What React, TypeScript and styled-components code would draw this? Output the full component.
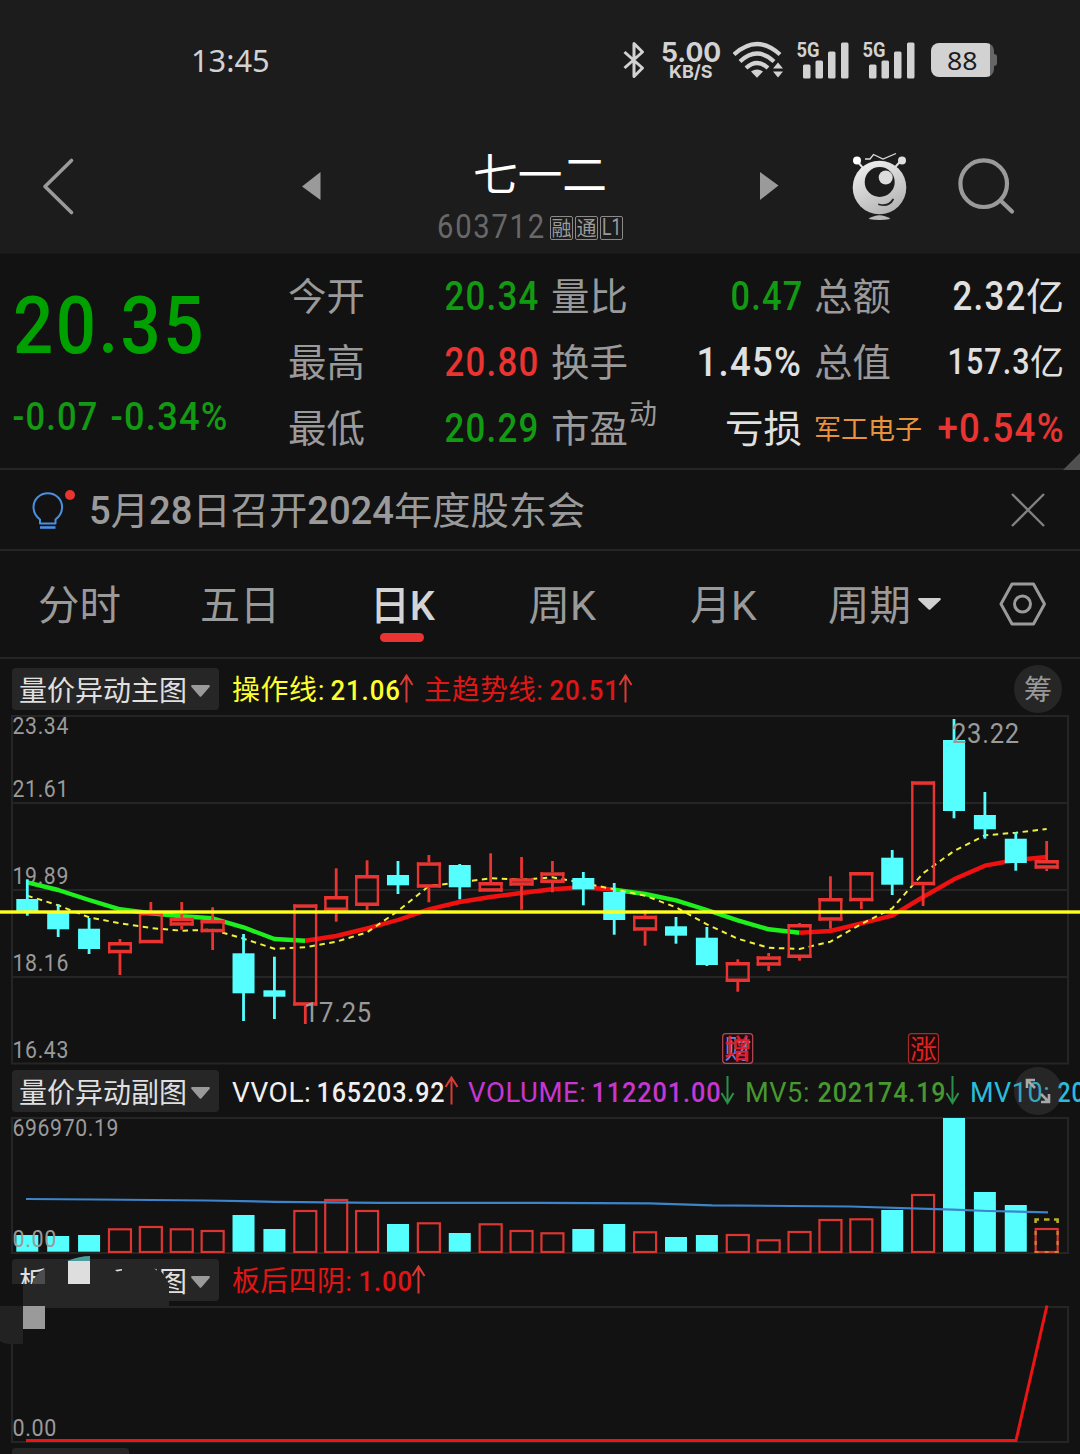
import React, { useLayoutEffect, useRef, useState } from "react";
import styled, { createGlobalStyle } from "styled-components";

const FONT = `Roboto, "Noto Sans CJK SC", sans-serif`;
const RED = "#e93431";
const GREEN = "#129a12";
const CYAN = "#55ffff";
const GREY = "#9a9a9a";
const LINE = "#252525";

const Global = createGlobalStyle`
  html, body { margin: 0; background: #121212; overflow: hidden; }
  * { box-sizing: border-box; }
`;

const Screen = styled.div`
  width: 1080px;
  height: 1454px;
  overflow: hidden;
  background: #121212;
  font-family: ${FONT};
  color: #e0e0e0;
  display: flex;
  flex-direction: column;
`;

/* ---------- text squeezed to a given advance width ---------- */

const FitBox = styled.span<{ $w: number; $size: number; $color?: string; $weight?: number; $dx?: number; $dy?: number; $font?: string }>`
  display: inline-block;
  flex: none;
  width: ${(p) => p.$w}px;
  height: ${(p) => p.$size}px;
  line-height: ${(p) => p.$size}px;
  font-size: ${(p) => p.$size}px;
  font-weight: ${(p) => p.$weight ?? 400};
  color: ${(p) => p.$color ?? "inherit"};
  font-family: ${(p) => p.$font ?? "inherit"};
  white-space: nowrap;
  transform: translate(${(p) => p.$dx ?? 0}px, ${(p) => p.$dy ?? 0}px);
`;
const FitInner = styled.span<{ $ls: number }>`
  display: inline-block;
  transform-origin: 0 50%;
  letter-spacing: ${(p) => p.$ls}em;
`;
const Strong = styled.b`
  font-weight: 500;
`;

type FitProps = { w: number; size: number; color?: string; weight?: number; dx?: number; dy?: number; font?: string; ls?: number; children: React.ReactNode };
function Fit({ w, size, color, weight, dx, dy, font, ls = 0, children }: FitProps) {
  const ref = useRef<HTMLSpanElement>(null);
  const [k, setK] = useState(1);
  useLayoutEffect(() => {
    if (ref.current && ref.current.offsetWidth) setK(w / ref.current.offsetWidth);
  }, [w, size]);
  return (
    <FitBox $w={w} $size={size} $color={color} $weight={weight} $dx={dx} $dy={dy} $font={font}>
      <FitInner ref={ref} $ls={ls} style={{ transform: `scaleX(${k})` }}>{children}</FitInner>
    </FitBox>
  );
}

const Num = (p: FitProps) => <Fit weight={500} ls={0.035} dx={1.5} {...p} />;

/* ---------- status bar ---------- */

const Top = styled.header`
  height: 254px;
  flex: none;
  background: #1c1c1c;
  border-bottom: 1px solid #181818;
  display: flex;
  flex-direction: column;
`;
const StatusBar = styled.div`
  height: 120px;
  padding: 0 83px 0 191px;
  display: flex;
  align-items: center;
  justify-content: space-between;
  color: #d2d2d2;
`;
const StatusIcons = styled.div`
  display: flex;
  align-items: center;
`;
const Speed = styled.div`
  width: 60px;
  margin: 0 12px 0 16px;
  display: flex;
  flex-direction: column;
  align-items: center;
`;
const Signal = styled.div`
  width: 52px;
  height: 38px;
  margin-right: 14px;
`;
const Battery = styled.div`
  display: flex;
  align-items: center;
  margin-left: 2px;
`;
const BatteryBody = styled.div`
  width: 63px;
  height: 34px;
  border-radius: 8px;
  background: linear-gradient(90deg, #d2d2d2 59px, #666 59px);
  color: #1c1c1c;
  display: flex;
  align-items: center;
  padding-left: 16px;
`;
const BatteryNub = styled.div`
  width: 3px;
  height: 12px;
  border-radius: 0 3px 3px 0;
  background: #666;
`;

const SignalIcon = () => (
  <svg width="52" height="38" viewBox="0 0 52 38" fill="#d2d2d2" overflow="visible">
    <text x="-0.500" y="15.500" fontSize="20.500" fontWeight="700" fontFamily="Roboto" textLength="23" lengthAdjust="spacingAndGlyphs">5G</text>
    <rect x="6" y="23.500" width="7.500" height="14" rx="1.500" />
    <rect x="18.500" y="19.500" width="7.500" height="18" rx="1.500" />
    <rect x="31" y="10.500" width="7.500" height="27" rx="1.500" />
    <rect x="44" y="1.500" width="7.500" height="36" rx="1.500" />
  </svg>
);

/* ---------- title bar ---------- */

const TitleBar = styled.div`
  height: 133px;
  display: grid;
  grid-template-columns: 300px 137px 186px 135px 93px 60px 1fr;
  align-items: start;
`;
const Slot = styled.div<{ $top: number; $left?: number }>`
  padding: ${(p) => p.$top}px 0 0 ${(p) => p.$left ?? 0}px;
  line-height: 0;
`;
const TitleBlock = styled.div`
  display: flex;
  flex-direction: column;
  padding-top: 33px;
`;
const TitleName = styled.div`
  height: 47px;
  padding-left: 36px;
  line-height: 0;
`;
const CodeRow = styled.div`
  display: flex;
  align-items: center;
  height: 50px;
  gap: 2px;
`;
const MarketTag = styled.span`
  width: 23px;
  height: 24px;
  border: 1px solid #8a8a8a;
  border-radius: 2px;
  display: flex;
  align-items: center;
  justify-content: center;
  margin-top: 5px;
`;

const RobotIcon = () => (
  <svg width="58" height="70" viewBox="0 0 58 70">
    <defs>
      <linearGradient id="bot" x1="0.2" y1="0" x2="0.7" y2="1">
        <stop offset="0" stopColor="#f0f0f0" />
        <stop offset="1" stopColor="#b2b2b2" />
      </linearGradient>
    </defs>
    <path d="M5.500 9.500l7 8M50 9.500l-7 8" stroke="#e0e0e0" strokeWidth="2" />
    <circle cx="6" cy="9.500" r="4" fill="#fff" />
    <circle cx="51" cy="9.500" r="4" fill="#e0e0e0" />
    <path d="M14 8h5l3.500-4.500L32 8l13-5.500" fill="none" stroke="#ddd" strokeWidth="1.300" />
    <circle cx="28.500" cy="36.500" r="26.800" fill="url(#bot)" />
    <circle cx="28.700" cy="31" r="15" fill="#1c1c1c" />
    <circle cx="34.700" cy="26.500" r="7" fill="#dcdcdc" />
    <path d="M28 53.500q10 2.500 14-5" fill="none" stroke="#222" strokeWidth="1.800" strokeLinecap="round" />
    <path d="M17.500 68q11-7.500 22 0q-11 1.800-22 0z" fill="#b8b8b8" />
  </svg>
);

/* ---------- quote ---------- */

const Quote = styled.section`
  position: relative;
  height: 216px;
  flex: none;
  display: grid;
  grid-template-columns: 275px 249px 249px 249px;
  column-gap: 14px;
  border-bottom: 2px solid ${LINE};
`;
const PriceCol = styled.div`
  display: flex;
  flex-direction: column;
  padding: 33px 0 0 12px;
`;
const ChangeRow = styled.div`
  display: flex;
  gap: 12px;
  padding-top: 31px;
`;
const StatCol = styled.div`
  display: flex;
  flex-direction: column;
  padding-top: 9px;
`;
const StatRow = styled.div`
  height: 66px;
  display: flex;
  align-items: center;
  justify-content: space-between;
`;
const Group = styled.span`
  display: flex;
  align-items: center;
`;
const Corner = styled.span`
  position: absolute;
  right: 0;
  bottom: -2px;
  border-left: 17px solid transparent;
  border-bottom: 17px solid #505050;
`;

/* ---------- notice ---------- */

const Notice = styled.section`
  height: 81px;
  flex: none;
  display: flex;
  align-items: center;
  padding: 0 34px 0 31px;
  border-bottom: 2px solid ${LINE};
`;
const NoticeText = styled.div`
  flex: 1;
  padding-left: 12px;
  line-height: 0;
`;

/* ---------- tabs ---------- */

const Tabs = styled.nav`
  height: 108px;
  flex: none;
  display: grid;
  grid-template-columns: 161px 171px 158px 161px 138px 171px 50px;
  padding-left: 39px;
  border-bottom: 2px solid ${LINE};
`;
const Tab = styled.div<{ $on?: boolean }>`
  display: flex;
  flex-direction: column;
  padding-top: 32px;
  color: ${(p) => (p.$on ? "#d4d4d4" : GREY)};
`;
const TabLine = styled.div`
  display: flex;
  align-items: center;
  gap: 7px;
  height: 42px;
`;
const Underline = styled.span`
  width: 44px;
  height: 9px;
  margin: 8px 0 0 9px;
  border-radius: 5px;
  background: ${RED};
`;

/* ---------- chart panels ---------- */

const Panel = styled.section<{ $h: number; $pad: number }>`
  position: relative;
  height: ${(p) => p.$h}px;
  flex: none;
  display: flex;
  flex-direction: column;
  padding-top: ${(p) => p.$pad}px;
`;
const Legend = styled.div`
  display: flex;
  align-items: center;
  height: 42px;
  flex: none;
  padding-left: 12px;
  white-space: nowrap;
  overflow: hidden;
`;
const Picker = styled.div`
  width: 207px;
  height: 42px;
  flex: none;
  border-radius: 4px;
  background: #262626;
  display: flex;
  align-items: center;
  justify-content: space-between;
  padding: 0 9px 0 7px;
  margin-right: 13px;
`;
const CaretBox = styled.span`
  line-height: 0;
  padding-top: 4px;
`;
const PickerEnds = styled.span`
  width: 168px;
  display: flex;
  justify-content: space-between;
`;
const Metric = styled.span<{ $gap: number }>`
  display: flex;
  align-items: center;
  margin-right: ${(p) => p.$gap}px;
`;
const Canvas = styled.svg`
  display: block;
  flex: none;
  margin-top: 4px;
`;
const RoundButton = styled.div<{ $top: number }>`
  position: absolute;
  left: 1014px;
  top: ${(p) => p.$top}px;
  width: 48px;
  height: 48px;
  border-radius: 50%;
  background: rgba(100, 100, 100, 0.25);
  display: flex;
  align-items: center;
  justify-content: center;
`;
const Smudge = styled.svg`
  position: absolute;
  left: 0;
  top: 0;
`;
const NextPicker = styled.div`
  width: 117px;
  height: 10px;
  margin: 4px 0 0 12px;
  border-radius: 4px 4px 0 0;
  background: #262626;
`;

const Caret = ({ w, h, c }: { w: number; h: number; c: string }) => (
  <svg width={w} height={h} viewBox="0 0 20 12" preserveAspectRatio="none">
    <path d="M1 0h18q1.500.5.5 2L11 11.300q-1 1-2 0L.5 2Q-.5.500 1 0z" fill={c} />
  </svg>
);
const Arrow = ({ up }: { up?: boolean }) => (
  <svg width="15" height="30" viewBox="0 0 15 30">
    <path
      d={up ? "M7.500 28.500V1M1.500 11L7.500 1.500L13.500 11" : "M7.500 0V27M1.500 17L7.500 27L13.500 17"}
      fill="none"
      stroke={up ? "#d93a35" : "#2b9148"}
      strokeWidth="2"
    />
  </svg>
);

type MetricProps = { name: string; nw: number; pad?: number; value: string; vw: number; color: string; up?: boolean; gap: number; arrow?: boolean };
const MetricValue = styled.span<{ $pad: number }>`
  display: flex;
  padding-left: ${(p) => p.$pad}px;
`;
const MetricItem = ({ name, nw, pad = 4, value, vw, color, up, gap, arrow = true }: MetricProps) => (
  <Metric $gap={gap}>
    <Fit w={nw - pad} size={28} color={color} dy={2} ls={0.02}>{name}</Fit>
    <MetricValue $pad={pad}><Num w={vw} size={28} color={color} dy={1.5}>{value}</Num></MetricValue>
    {arrow && <Arrow up={up} />}
  </Metric>
);

const cx = (i: number) => 27.3 + i * 30.89;

/* [falling, high, body top, body bottom, low] */
const candles: [number, number, number, number, number][] = [
  [1, 879.3, 899, 911, 915.7], [1, 904.3, 912, 929.3, 937], [1, 918, 928.7, 949, 954], [0, 939, 942, 953.3, 975],
  [0, 902, 912, 943.3, 943.3], [0, 902, 917.7, 925.7, 929.7], [0, 907.3, 920, 932.3, 950], [1, 934, 953.3, 993.3, 1021],
  [1, 956.7, 990.3, 996.7, 1019], [0, 904.3, 904.3, 1005.7, 1024], [0, 868.3, 896, 911, 921.7], [0, 860.3, 875, 906, 910],
  [1, 861, 875, 885.3, 894], [0, 855, 862.3, 887.7, 902.3], [1, 864, 865, 887.3, 899.3], [0, 853.3, 882, 891.7, 891.7],
  [0, 857, 878.3, 885.7, 909.7], [0, 861, 872.3, 883, 892.3], [1, 872, 878, 889.3, 905.3], [1, 883, 892, 920, 934.7],
  [0, 910, 915.7, 930.7, 945.7], [1, 917, 926.3, 935.7, 943.7], [1, 927, 937.7, 965, 966], [0, 959.3, 962, 982, 991.7],
  [0, 953, 956.3, 965.7, 971], [0, 923, 924, 958, 960.7], [0, 876.3, 898, 920.7, 928.7], [0, 872, 872, 901.3, 909],
  [1, 850, 857.7, 884.7, 895], [0, 781.3, 781.3, 885.3, 906], [1, 719, 740, 811, 818.3], [1, 792, 815, 829.3, 838.7],
  [1, 832.3, 838.7, 863, 870.7], [0, 841, 860, 868.7, 871],
];
const trend = [
  882.3, 890, 900, 909.3, 913.3, 916.3, 918.3, 927.3, 939, 940.7, 936, 928.3, 920, 909.3, 902, 897, 893, 889.3, 887.3, 889.7,
  894, 900.3, 910, 920.3, 929.3, 932.7, 931, 923.3, 915.7, 897, 879.3, 865.7, 860, 857,
];
const operate = [
  895.7, 905.3, 917.3, 923.3, 928, 930.7, 929.7, 938.7, 948.7, 947.3, 941.7, 932.3, 911, 886, 882.3, 878.3, 879.7, 877.3, 883,
  889.3, 895.7, 907.3, 924.3, 938.7, 947.7, 949, 941.7, 924, 908.3, 873.3, 851, 835.3, 832.7, 829,
];
const volumes = [
  1235, 1236, 1235, 1228.3, 1226, 1228.3, 1230, 1215, 1229, 1210, 1199, 1210, 1224, 1222.3, 1233, 1223.3, 1230, 1232.3, 1229,
  1224, 1231.3, 1237, 1235, 1234, 1239.3, 1231, 1219, 1218.3, 1210, 1194, 1118, 1192, 1205, 1228,
];
const seg = (a: number[], from: number, to: number) =>
  a.slice(from, to + 1).map((y, k) => `${cx(from + k)},${y}`).join(" ");

const Label = ({ x, y, w, size = 23.5, children }: { x: number; y: number; w: number; size?: number; children: string }) => (
  <text x={x} y={y} fontSize={size} fill={GREY} fontFamily="Roboto" letterSpacing="0.03em" textLength={w} lengthAdjust="spacingAndGlyphs">{children}</text>
);

const Candle = ({ i }: { i: number }) => {
  const [down, hi, t, b, lo] = candles[i];
  const x = cx(i);
  if (down)
    return (
      <g fill={CYAN}>
        <rect x={x - 1.4} y={hi} width="2.800" height={lo - hi} />
        <rect x={x - 11} y={t} width="22" height={b - t} />
      </g>
    );
  return (
    <g fill={RED}>
      {t > hi && <rect x={x - 1.4} y={hi} width="2.800" height={t - hi} />}
      {lo > b && <rect x={x - 1.4} y={b} width="2.800" height={lo - b} />}
      <rect x={x - 12} y={t} width="24" height="3.500" />
      <rect x={x - 12} y={b - 3.5} width="24" height="3.500" />
      <rect x={x - 12} y={t} width="2.400" height={b - t} />
      <rect x={x + 9.6} y={t} width="2.400" height={b - t} />
    </g>
  );
};

const MainChart = () => (
  <Canvas width="1080" height="352" viewBox="0 714 1080 352">
    <g stroke={LINE} strokeWidth="2" fill="none">
      <rect x="12" y="716" width="1056" height="347.500" />
      <path d="M12 803H1068M12 890H1068M12 977H1068" />
    </g>
    <Label x={12.5} y={734} w={56.5}>23.34</Label>
    <Label x={12.5} y={797} w={56.5}>21.61</Label>
    <Label x={12.5} y={884} w={56.5}>19.89</Label>
    <Label x={12.5} y={971} w={56.5}>18.16</Label>
    <Label x={12.5} y={1058} w={56.5}>16.43</Label>
    <g fill="none" strokeWidth="4.400" strokeLinejoin="round">
      <polyline points={seg(trend, 0, 9)} stroke="#1df01d" />
      <polyline points={seg(trend, 9, 19)} stroke="#f01010" />
      <polyline points={seg(trend, 19, 25)} stroke="#1df01d" />
      <polyline points={seg(trend, 25, 33)} stroke="#f01010" />
      <polyline points={seg(operate, 0, 33)} stroke="#f0f03c" strokeWidth="2" strokeDasharray="5.500 4.500" />
    </g>
    {candles.map((_, i) => <Candle key={i} i={i} />)}
    <rect x="0" y="910.300" width="1080" height="3.400" fill="#ffff1e" />
    <Label x={304} y={1022} w={68} size={28}>17.25</Label>
    <Label x={952} y={743} w={68} size={28}>23.22</Label>
    <g fontFamily="Noto Sans CJK SC" fontSize="27" textAnchor="middle">
      <rect x="722.700" y="1033.700" width="30" height="29.600" rx="3" fill="#220a10" stroke="#b84a55" strokeWidth="1.200" />
      <text x="738" y="1058.500" fill="#5f86dc">财</text>
      <text x="738" y="1058.500" fill="#e0202c" stroke="#e0202c" strokeWidth="0.500">增</text>
      <rect x="908.500" y="1033.700" width="30" height="29.600" rx="3" fill="#1f0808" stroke="#a32c2a" strokeWidth="1.200" />
      <text x="923.500" y="1058.500" fill="#dc2320">涨</text>
    </g>
  </Canvas>
);

const VolumeChart = () => (
  <Canvas width="1080" height="139" viewBox="0 1116 1080 139">
    <rect x="12" y="1118" width="1056" height="135" stroke={LINE} strokeWidth="2" fill="none" />
    <Label x={12.5} y={1136} w={106.5}>696970.19</Label>
    {volumes.map((t, i) =>
      candles[i][0] ? (
        <rect key={i} x={cx(i) - 11} y={t} width="22" height={1251.7 - t} fill={CYAN} />
      ) : (
        <rect key={i} x={cx(i) - 11} y={t + 1} width="22" height={1251 - t} fill="none" stroke="#dc3632" strokeWidth="2.200" />
      ),
    )}
    <path d="M1035.600 1223V1219.500H1039M1044 1219.500H1049.500M1054 1219.500H1057.600V1223" fill="none" stroke="#b8b02c" strokeWidth="2.600" />
    <path d="M1035.600 1231V1252H1057.600V1231" fill="none" stroke="#c08a2c" strokeWidth="2.200" strokeDasharray="4 6" />
    <polyline
      points="26,1199 96,1199.500 207,1200.500 275,1201.800 380,1202.800 540,1202.800 650,1203.300 712,1205.300 850,1206.500 953,1209.700 988,1211 1048,1212.300"
      fill="none" stroke="#3d84cb" strokeWidth="2.200"
    />
    <Label x={12.5} y={1247} w={44.5}>0.00</Label>
  </Canvas>
);

const SignalChart = () => (
  <Canvas width="1080" height="139" viewBox="0 1305 1080 139">
    <rect x="12" y="1307" width="1056" height="135" stroke={LINE} strokeWidth="2" fill="none" />
    <Label x={12.5} y={1436} w={44.5}>0.00</Label>
    <polyline points="26,1440.500 1016,1440.500 1047,1305.500" fill="none" stroke="#ee1414" strokeWidth="3" />
  </Canvas>
);

const Stat = ({ label, children }: { label: string; children: React.ReactNode }) => (
  <StatRow>
    <Fit w={77} size={38} color={GREY} dx={-1} dy={1}>{label}</Fit>
    {children}
  </StatRow>
);

export default function App() {
  return (
    <Screen>
      <Global />
      <Top>
        <StatusBar>
          <Fit w={79} size={30} font={`"Noto Sans", sans-serif`} dy={1}>13:45</Fit>
          <StatusIcons>
            <svg width="22" height="38" viewBox="0 0 22 38" fill="none" stroke="#d2d2d2" strokeWidth="3">
              <path d="M1.500 11L19.500 27L11 35.500V2.500L19.500 11L1.500 27" strokeLinejoin="round" />
            </svg>
            <Speed>
              <Fit w={60} size={27} weight={700} font="Inter" dy={1}>5.00</Fit>
              <Fit w={44} size={18} weight={700} font="Inter" dy={-2}>KB/S</Fit>
            </Speed>
            <svg width="64" height="38" viewBox="1 0 64 38" fill="none" stroke="#d2d2d2" strokeWidth="4.200">
              <path d="M2 13.500Q25 -7.500 48 13.500M8 20.500Q25 4.500 42 20.500M14 27Q25 17 36 27" />
              <path d="M19 30.500Q25 26.500 31 30.500L25 36.800z" fill="#d2d2d2" stroke="none" />
              <path d="M41 27.500h10l-5-6zM41 30.500h10l-5 6z" fill="#d2d2d2" stroke="none" />
            </svg>
            <Signal><SignalIcon /></Signal>
            <Signal><SignalIcon /></Signal>
            <Battery>
              <BatteryBody><Fit w={31} size={25} font={`"Noto Sans", sans-serif`}>88</Fit></BatteryBody>
              <BatteryNub />
            </Battery>
          </StatusIcons>
        </StatusBar>
        <TitleBar>
          <Slot $top={37} $left={41}>
            <svg width="36" height="60" viewBox="0 0 36 60">
              <path d="M30.500 3.500L4 29.500L30.500 55.500" fill="none" stroke={GREY} strokeWidth="3.600" strokeLinecap="round" strokeLinejoin="round" />
            </svg>
          </Slot>
          <Slot $top={51} $left={1}>
            <svg width="20" height="30"><path d="M19.500 1V29L1 15.500z" fill={GREY} /></svg>
          </Slot>
          <TitleBlock>
            <TitleName><Fit w={134} size={44} color="#fff" dy={1}>七一二</Fit></TitleName>
            <CodeRow>
              <Fit w={109} size={34} color="#686868" ls={0.06} dy={1}>603712</Fit>
              <span />
              <MarketTag><Fit w={20} size={20} color={GREY} dy={1}>融</Fit></MarketTag>
              <MarketTag><Fit w={20} size={20} color={GREY} dy={1}>通</Fit></MarketTag>
              <MarketTag><Fit w={19} size={23} color={GREY}>L1</Fit></MarketTag>
            </CodeRow>
          </TitleBlock>
          <Slot $top={51} $left={137}>
            <svg width="20" height="30"><path d="M0 1V29L18.500 14.500z" fill={GREY} /></svg>
          </Slot>
          <Slot $top={31} />
          <Slot $top={31}><RobotIcon /></Slot>
          <Slot $top={37} $left={46}>
            <svg width="60" height="60" viewBox="0 0 60 60" fill="none" stroke={GREY} strokeWidth="4.200">
              <circle cx="26.700" cy="26.700" r="23.300" />
              <path d="M43.500 43.500L55 54.500" strokeLinecap="round" />
            </svg>
          </Slot>
        </TitleBar>
      </Top>

      <Quote>
        <PriceCol>
          <Num w={193} size={80} color="#00a000" dx={1} dy={-1}>20.35</Num>
          <ChangeRow>
            <Num w={86} size={38} color={GREEN} dx={0.5}>-0.07</Num>
            <Num w={118} size={38} color={GREEN} dx={0.5}>-0.34%</Num>
          </ChangeRow>
        </PriceCol>
        <StatCol>
          <Stat label="今开"><Num w={95} size={40} color={GREEN} dy={1}>20.34</Num></Stat>
          <Stat label="最高"><Num w={95} size={40} color={RED} dy={1}>20.80</Num></Stat>
          <Stat label="最低"><Num w={95} size={40} color={GREEN} dy={1}>20.29</Num></Stat>
        </StatCol>
        <StatCol>
          <Stat label="量比"><Num w={73} size={40} color={GREEN} dx={2.5} dy={1}>0.47</Num></Stat>
          <Stat label="换手"><Num w={106} size={40} dy={1}>1.45%</Num></Stat>
          <StatRow>
            <Group>
              <Fit w={77} size={38} color={GREY} dx={-1} dy={1}>市盈</Fit>
              <Fit w={28} size={28} color={GREY} dy={-13}>动</Fit>
            </Group>
            <Fit w={77} size={38} dx={1} dy={1}>亏损</Fit>
          </StatRow>
        </StatCol>
        <StatCol>
          <Stat label="总额">
            <Group><Num w={74} size={40} dx={0.5} dy={1}>2.32</Num><Fit w={38} size={38} dy={1}>亿</Fit></Group>
          </Stat>
          <Stat label="总值">
            <Group><Num w={83} size={36} dx={0.5}>157.3</Num><Fit w={34} size={35} dy={1}>亿</Fit></Group>
          </Stat>
          <StatRow>
            <Fit w={108} size={27} color="#e8923c" dx={-1} dy={2}>军工电子</Fit>
            <Num w={127} size={40} color={RED} dx={0.5} dy={1}>+0.54%</Num>
          </StatRow>
        </StatCol>
        <Corner />
      </Quote>

      <Notice>
        <svg width="46" height="42" viewBox="31 488 46 42" fill="none" stroke="#4a8fe2" strokeWidth="2">
          <path d="M40 522.500V518.500Q33.500 513.500 33.500 506A14.300 13.800 0 0 1 62.100 506Q62.100 513.500 55.500 518.500V522.500z" strokeLinejoin="round" />
          <path d="M40 526.500H55.500" strokeWidth="2.600" />
          <circle cx="70" cy="494" r="5" fill={RED} stroke="none" />
        </svg>
        <NoticeText>
          <Fit w={496} size={38} color={GREY} dy={1}>
            <Strong>5</Strong>月<Strong>28</Strong>日召开<Strong>2024</Strong>年度股东会
          </Fit>
        </NoticeText>
        <svg width="36" height="36" viewBox="0 0 36 36"><path d="M2 2L34 34M34 2L2 34" stroke="#808080" strokeWidth="2.400" /></svg>
      </Notice>

      <Tabs>
        <Tab><TabLine><Fit w={83} size={41} dx={-1} dy={2}>分时</Fit></TabLine></Tab>
        <Tab><TabLine><Fit w={80} size={41} dy={2}>五日</Fit></TabLine></Tab>
        <Tab $on><TabLine><Fit w={65} size={41} weight={500} dx={-1} dy={2}>日K</Fit></TabLine><Underline /></Tab>
        <Tab><TabLine><Fit w={68} size={41} dx={-0.5} dy={2}>周K</Fit></TabLine></Tab>
        <Tab><TabLine><Fit w={67} size={41} dy={2}>月K</Fit></TabLine></Tab>
        <Tab><TabLine><Fit w={83} size={41} dy={2}>周期</Fit><Caret w={23} h={12} c="#d0d0d0" /></TabLine></Tab>
        <Tab>
          <TabLine>
            <svg width="48" height="44" viewBox="0 0 48 44" fill="none" stroke={GREY} strokeWidth="3" strokeLinejoin="round">
              <path d="M13 2H34.500L45.500 22L34.500 42H13L2 22z" />
              <circle cx="23.500" cy="22" r="8" />
            </svg>
          </TabLine>
        </Tab>
      </Tabs>

      <Panel $h={407} $pad={9}>
        <Legend>
          <Picker><Fit w={168} size={28} dy={2.5}>量价异动主图</Fit><CaretBox><Caret w={19} h={12} c={GREY} /></CaretBox></Picker>
          <MetricItem name="操作线:" nw={97} value="21.06" vw={70} color="#ffff2c" up gap={10} />
          <MetricItem name="主趋势线:" nw={124} value="20.51" vw={70} color="#e01616" up gap={0} />
        </Legend>
        <MainChart />
        <RoundButton $top={6}><Fit w={28} size={28} color={GREY} dy={2}>筹</Fit></RoundButton>
      </Panel>

      <Panel $h={189} $pad={4}>
        <Legend>
          <Picker><Fit w={168} size={28} dy={2.5}>量价异动副图</Fit><CaretBox><Caret w={19} h={12} c={GREY} /></CaretBox></Picker>
          <MetricItem name="VVOL:" nw={83} value="165203.92" vw={129} color="#f0f0f0" up gap={9} />
          <MetricItem name="VOLUME:" nw={122} value="112201.00" vw={130} color="#c836d2" gap={10} />
          <MetricItem name="MV5:" nw={71} pad={6} value="202174.19" vw={129} color="#47992f" gap={10} />
          <MetricItem name="MV10:" nw={86} pad={6} value="20" vw={28} color="#2bbcdc" gap={0} arrow={false} />
        </Legend>
        <VolumeChart />
        <RoundButton $top={1}>
          <svg width="26" height="26" viewBox="0 0 26 26" fill="none" stroke="#a8a8a8" strokeWidth="2.600">
            <path d="M2 10V2H10M2 2L10 10M24 16V24H16M24 24L16 16" />
          </svg>
        </RoundButton>
      </Panel>

      <Panel $h={189} $pad={4}>
        <Legend>
          <Picker>
            <PickerEnds><Fit w={28} size={28} dy={2.5}>板</Fit><Fit w={28} size={28} dy={2.5}>图</Fit></PickerEnds>
            <CaretBox><Caret w={19} h={12} c={GREY} /></CaretBox>
          </Picker>
          <MetricItem name="板后四阴:" nw={125} value="1.00" vw={54} color="#e01616" up gap={0} />
        </Legend>
        <SignalChart />
        <Smudge width="220" height="90" viewBox="0 1255 220 90">
          <path d="M67 1261Q80 1256 90 1256V1261z" fill="#489e9e" />
          <path d="M12 1284H24V1304H12z" fill="#121212" />
          <path d="M32 1284Q36 1272 45 1269L67 1261H105L155 1267Q163 1271 169 1284L169 1306H23V1284z" fill="#262626" />
          <path d="M32 1284Q36 1272 45 1269V1284z" fill="#4c4c4c" />
          <path d="M68 1261H90V1284H68z" fill="#dedede" />
          <path d="M115 1270l7-1v1.500l-5 1zM154 1268.500l3 1v1z" fill="#dedede" />
          <path d="M0 1306H23V1344H10Q4 1344 0 1341z" fill="#222" />
          <path d="M23 1306H45V1329H23z" fill="#9a9a9a" />
        </Smudge>
      </Panel>
      <NextPicker />
    </Screen>
  );
}
